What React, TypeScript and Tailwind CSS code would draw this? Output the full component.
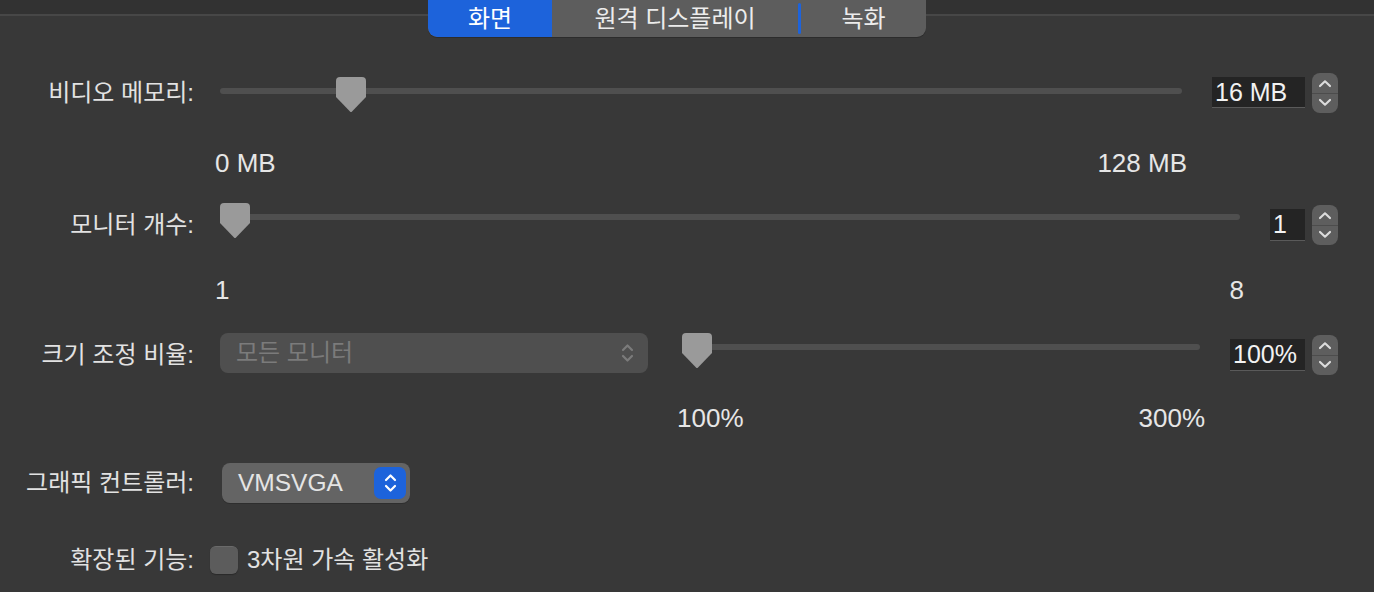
import React from "react";

const FONT = "font-['Liberation_Sans','Noto_Sans_CJK_KR',sans-serif]";

function Thumb() {
  return (
    <svg width="30" height="35" viewBox="0 0 30 35">
      <path d="M4 0 H26 Q30 0 30 4 V20 L16 34.5 Q15 35.5 14 34.5 L0 20 V4 Q0 0 4 0 Z" fill="#9a9a9a" />
    </svg>
  );
}

function Slider({ widthClass, thumbLeft, mtClass }: { widthClass: string; thumbLeft: number; mtClass: string }) {
  return (
    <div className={`relative h-[36px] shrink-0 ${widthClass} ${mtClass}`}>
      <div className="absolute left-0 right-0 top-[11px] h-[6px] rounded-full bg-[#4f4f4f]" />
      <div className="absolute top-0" style={{ left: thumbLeft }}>
        <Thumb />
      </div>
    </div>
  );
}

function Chevrons({ color }: { color: string }) {
  return (
    <svg width="13" height="22" viewBox="0 0 13 22" fill="none" stroke={color} strokeWidth="2.2" strokeLinecap="round" strokeLinejoin="round">
      <path d="M2 8 L6.5 3.5 L11 8" />
      <path d="M2 14 L6.5 18.5 L11 14" />
    </svg>
  );
}

function Stepper() {
  return (
    <div className="ml-[7px] flex h-[40px] w-[26px] shrink-0 flex-col overflow-hidden rounded-[8px] bg-[#5e5e5e]">
      <div className="flex flex-1 items-center justify-center border-b border-[#4c4c4c] pt-[1px]">
        <svg width="14" height="9" viewBox="0 0 14 9" fill="none" stroke="#dcdcdc" strokeWidth="2.2" strokeLinecap="round" strokeLinejoin="round">
          <path d="M2 7 L7 2.3 L12 7" />
        </svg>
      </div>
      <div className="flex flex-1 items-center justify-center pb-[1px]">
        <svg width="14" height="9" viewBox="0 0 14 9" fill="none" stroke="#dcdcdc" strokeWidth="2.2" strokeLinecap="round" strokeLinejoin="round">
          <path d="M2 2 L7 6.7 L12 2" />
        </svg>
      </div>
    </div>
  );
}

function Field({ value, widthClass, mtClass, hClass }: { value: string; widthClass: string; mtClass: string; hClass: string }) {
  return (
    <div className={`flex shrink-0 items-center border-b border-[#5a5a5a] bg-[#242424] pl-[3px] text-[25px] leading-none text-[#f2f2f2] ${widthClass} ${mtClass} ${hClass}`}>
      {value}
    </div>
  );
}

function Label({ text }: { text: string }) {
  return (
    <div className="w-[194px] shrink-0 text-right text-[24px] leading-[40px] text-[#e2e2e2]">{text}</div>
  );
}

export default function App() {
  return (
    <div className={`h-[592px] w-full overflow-hidden bg-[#383838] ${FONT}`}>
      {/* tab header */}
      <div className="relative h-[37px]">
        <div className="absolute left-0 right-0 top-0 h-[16px] border-b-2 border-[#474747] bg-[#323232]" />
        <div className="relative ml-[428px] flex h-[37px] w-[498px] overflow-hidden rounded-b-[9px] bg-[#5d5d5d] text-[24px] text-[#ececec] shadow-[0_1px_0_#2c2c2c]">
          <div className="flex w-[124px] items-center justify-center rounded-bl-[9px] bg-[#1d63db] text-white">화면</div>
          <div className="flex w-[246px] items-center justify-center">원격 디스플레이</div>
          <div className="my-[3px] w-[3px] rounded-full bg-[#1d63db]" />
          <div className="flex flex-1 items-center justify-center">녹화</div>
        </div>
      </div>

      {/* 비디오 메모리 */}
      <div className="mt-[36px] flex h-[40px] items-start">
        <Label text="비디오 메모리:" />
        <Slider widthClass="ml-[26px] w-[962px]" thumbLeft={116} mtClass="mt-[4px]" />
        <Field value="16 MB" widthClass="ml-[30px] w-[93px]" mtClass="mt-[4px]" hClass="h-[31px]" />
        <Stepper />
      </div>
      <div className="ml-[215px] mt-[36px] flex h-[28px] w-[972px] items-center justify-between text-[26px] leading-none text-[#e6e6e6]">
        <span>0 MB</span>
        <span>128 MB</span>
      </div>

      {/* 모니터 개수 */}
      <div className="mt-[28px] flex h-[40px] items-start">
        <Label text="모니터 개수:" />
        <Slider widthClass="ml-[26px] w-[1020px]" thumbLeft={0} mtClass="-mt-[2px]" />
        <Field value="1" widthClass="ml-[30px] w-[35px]" mtClass="mt-[4px]" hClass="h-[32px]" />
        <Stepper />
      </div>
      <div className="ml-[215px] mt-[31px] flex h-[28px] w-[1029px] items-center justify-between text-[26px] leading-none text-[#e6e6e6]">
        <span>1</span>
        <span>8</span>
      </div>

      {/* 크기 조정 비율 */}
      <div className="mt-[31px] flex h-[40px] items-start">
        <Label text="크기 조정 비율:" />
        <div className="ml-[26px] -mt-[2px] flex h-[40px] w-[428px] shrink-0 items-center justify-between rounded-[8px] bg-[#4f4f4f] pl-[16px] pr-[14px] text-[24px] text-[#7b7b7b]">
          <span>모든 모니터</span>
          <Chevrons color="#7b7b7b" />
        </div>
        <Slider widthClass="ml-[34px] w-[518px]" thumbLeft={0} mtClass="-mt-[2px]" />
        <Field value="100%" widthClass="ml-[30px] w-[75px]" mtClass="mt-[4px]" hClass="h-[32px]" />
        <Stepper />
      </div>
      <div className="ml-[677px] mt-[29px] flex h-[28px] w-[528px] items-center justify-between text-[26px] leading-none text-[#e6e6e6]">
        <span>100%</span>
        <span>300%</span>
      </div>

      {/* 그래픽 컨트롤러 */}
      <div className="mt-[31px] flex h-[40px] items-start">
        <Label text="그래픽 컨트롤러:" />
        <div className="ml-[28px] flex h-[40px] w-[188px] shrink-0 items-center justify-between rounded-[8px] bg-[#646464] pl-[16px] pr-[4px] text-[24.5px] leading-none text-[#e4e4e4] shadow-[0_1px_0_#2e2e2e]">
          <span>VMSVGA</span>
          <div className="flex h-[32px] w-[32px] items-center justify-center rounded-[7px] bg-[#1d63db]">
            <Chevrons color="#ffffff" />
          </div>
        </div>
      </div>

      {/* 확장된 기능 */}
      <div className="mt-[37px] flex h-[40px] items-center">
        <Label text="확장된 기능:" />
        <div className="ml-[16px] h-[28px] w-[28px] shrink-0 rounded-[6px] border-t border-[#6a6a6a] bg-[#5c5c5c] shadow-[0_1px_1px_#2a2a2a]" />
        <span className="ml-[9px] text-[24px] text-[#e2e2e2]">3차원 가속 활성화</span>
      </div>
    </div>
  );
}
